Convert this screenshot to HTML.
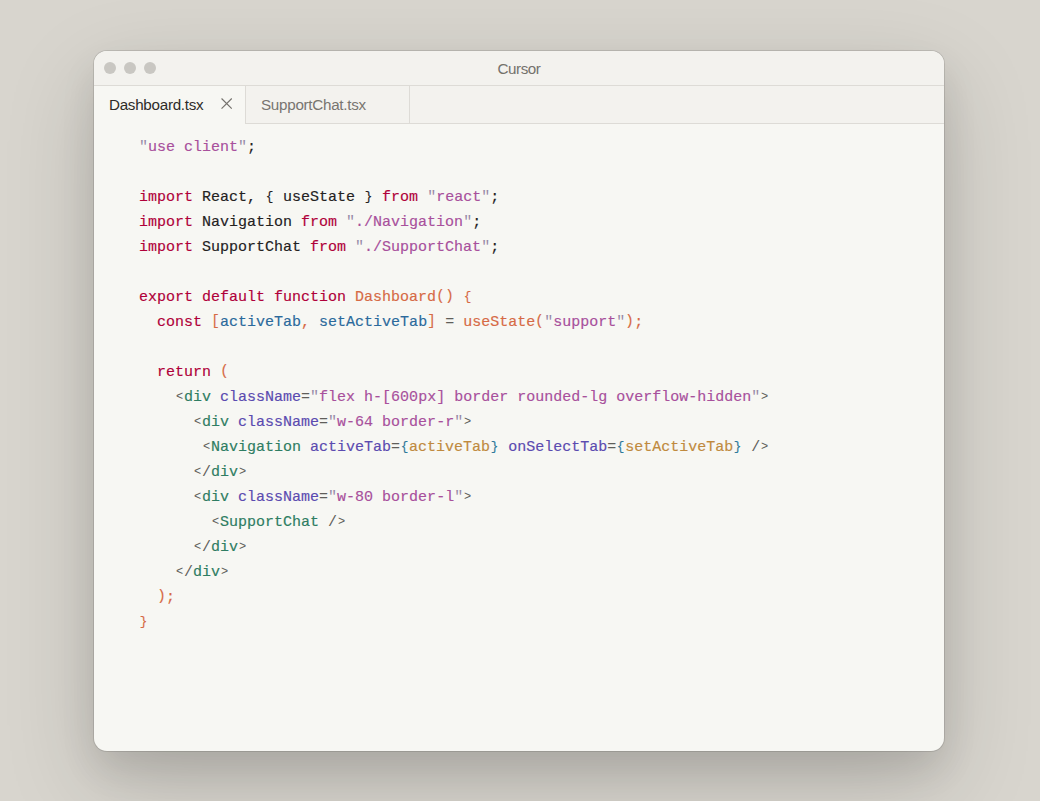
<!DOCTYPE html>
<html lang="en">
<head>
<meta charset="utf-8">
<title>Cursor</title>
<style>
  html, body { margin: 0; padding: 0; }
  body {
    width: 1040px; height: 801px; overflow: hidden;
    background: #d8d5ce;
    font-family: "Liberation Sans", sans-serif;
    position: relative;
  }
  .window {
    position: absolute; left: 94px; top: 51px; width: 850px; height: 700px;
    border-radius: 13px;
    background: #f7f7f3;
    box-shadow: 0 0 0 1px rgba(0,0,0,0.11), 0 32px 90px rgba(0,0,0,0.17), 0 18px 36px rgba(0,0,0,0.09);
    overflow: hidden;
  }
  .titlebar {
    position: absolute; left: 0; top: 0; right: 0; height: 34px;
    background: #f3f2ee; border-bottom: 1px solid #dddbd6;
  }
  .dot { position: absolute; top: 11px; width: 12px; height: 12px; border-radius: 50%; background: #c9c7c2; }
  .title {
    position: absolute; left: 0; right: 0; top: 1px; height: 34px; line-height: 34px;
    text-align: center; font-size: 15.2px; letter-spacing: -0.43px; color: #74716c;
  }
  .tabbar {
    position: absolute; left: 0; right: 0; top: 35px; height: 37px;
    background: #f3f2ee; border-bottom: 1px solid #dddbd6;
  }
  .tab {
    position: absolute; top: 0; height: 37px; line-height: 37px; font-size: 15.2px; letter-spacing: -0.27px;
    border-right: 1px solid #dddbd6; box-sizing: content-box; white-space: nowrap;
  }
  .tab span { position: absolute; left: 15px; top: 0px; }
  .tab.active { left: 0; width: 151px; background: #f7f7f3; height: 38px; color: #2e2c29; }
  .tab.inactive { left: 152px; width: 163px; color: #787570; }
  .tab svg { position: absolute; left: 126px; top: 11px; }
  pre.code {
    position: absolute; left: 45px; top: 84px; margin: 0;
    font-family: "Liberation Mono", monospace; font-size: 15px; line-height: 25px;
    color: #24221f; white-space: pre; -webkit-text-stroke: 0.16px currentColor;
  }
  .g { display: inline-block; line-height: 15px; }
  .g8 { transform: scale(0.8); }
  .g85 { transform: scale(0.85); transform-origin: 50% 40%; }
  .g9 { transform: scale(0.94); transform-origin: 50% 12%; }
  .k { color: #b0003a; }   /* keyword */
  .s { color: #a8509c; }   /* string */
  .q { color: #978ba8; -webkit-text-stroke: 0; }   /* quote */
  .f { color: #d66a45; }   /* function / bracket orange */
  .v { color: #2b6a9c; }   /* variable blue */
  .t { color: #2e7d62; }   /* tag green */
  .a { color: #5b4bb0; }   /* attribute */
  .p { color: #605e5a; -webkit-text-stroke: 0; }   /* punctuation */
  .b { color: #2f7a9a; }   /* jsx brace */
  .e { color: #c08a3e; }   /* jsx expression */
</style>
</head>
<body>
<div class="window">
  <div class="titlebar">
    <div class="dot" style="left:10px"></div>
    <div class="dot" style="left:30px"></div>
    <div class="dot" style="left:50px"></div>
    <div class="title">Cursor</div>
  </div>
  <div class="tabbar">
    <div class="tab active"><span>Dashboard.tsx</span>
      <svg width="14" height="14" viewBox="0 0 14 14"><path d="M1.55 1.5 L11.75 11.7 M11.75 1.5 L1.55 11.7" stroke="#75726d" stroke-width="1.15" fill="none"/></svg>
    </div>
    <div class="tab inactive"><span>SupportChat.tsx</span></div>
  </div>
<pre class="code"><span class="q">"</span><span class="s">use client</span><span class="q">"</span>;

<span class="k">import</span> React, <span class="g g85">{</span> useState <span class="g g85">}</span> <span class="k">from</span> <span class="q">"</span><span class="s">react</span><span class="q">"</span>;
<span class="k">import</span> Navigation <span class="k">from</span> <span class="q">"</span><span class="s">./Navigation</span><span class="q">"</span>;
<span class="k">import</span> SupportChat <span class="k">from</span> <span class="q">"</span><span class="s">./SupportChat</span><span class="q">"</span>;

<span class="k">export default function</span> <span class="f">Dashboard</span><span class="f g g9">(</span><span class="f g g9">)</span><span class="f"> </span><span class="f g g85">{</span>
  <span class="k">const</span> <span class="f g g9">[</span><span class="v">activeTab</span><span class="f">,</span> <span class="v">setActiveTab</span><span class="f g g9">]</span> <span class="p">=</span> <span class="f">useState</span><span class="f g g9">(</span><span class="q">"</span><span class="s">support</span><span class="q">"</span><span class="f g g9">)</span><span class="f">;</span>

  <span class="k">return</span> <span class="f g g9">(</span>
    <span class="p g g8">&lt;</span><span class="t">div</span> <span class="a">className</span><span class="p">=</span><span class="q">"</span><span class="s">flex h-[600px] border rounded-lg overflow-hidden</span><span class="q">"</span><span class="p g g8">&gt;</span>
      <span class="p g g8">&lt;</span><span class="t">div</span> <span class="a">className</span><span class="p">=</span><span class="q">"</span><span class="s">w-64 border-r</span><span class="q">"</span><span class="p g g8">&gt;</span>
       <span class="p g g8">&lt;</span><span class="t">Navigation</span> <span class="a">activeTab</span><span class="p">=</span><span class="b g g85">{</span><span class="e">activeTab</span><span class="b g g85">}</span> <span class="a">onSelectTab</span><span class="p">=</span><span class="b g g85">{</span><span class="e">setActiveTab</span><span class="b g g85">}</span> <span class="p">/</span><span class="p g g8">&gt;</span>
      <span class="p g g8">&lt;</span><span class="p">/</span><span class="t">div</span><span class="p g g8">&gt;</span>
      <span class="p g g8">&lt;</span><span class="t">div</span> <span class="a">className</span><span class="p">=</span><span class="q">"</span><span class="s">w-80 border-l</span><span class="q">"</span><span class="p g g8">&gt;</span>
        <span class="p g g8">&lt;</span><span class="t">SupportChat</span> <span class="p">/</span><span class="p g g8">&gt;</span>
      <span class="p g g8">&lt;</span><span class="p">/</span><span class="t">div</span><span class="p g g8">&gt;</span>
    <span class="p g g8">&lt;</span><span class="p">/</span><span class="t">div</span><span class="p g g8">&gt;</span>
  <span class="f g g9">)</span><span class="f">;</span>
<span class="f g g85">}</span></pre>
</div>
</body>
</html>
